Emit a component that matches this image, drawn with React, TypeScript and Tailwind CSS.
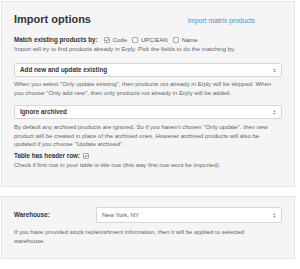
import React from "react";

function Check({ checked }: { checked?: boolean }) {
  return (
    <span className="relative inline-block h-[6px] w-[6px] shrink-0 rounded-[1px] border border-[#a8a8a8] bg-white">
      {checked && (
        <svg viewBox="0 0 10 10" className="absolute left-0 top-0 h-[4px] w-[4px]">
          <path d="M1.5 5 L4 7.8 L8.6 2" fill="none" stroke="#333" strokeWidth="1.8" />
        </svg>
      )}
    </span>
  );
}

function SelectBox({ label, bold, className }: { label: string; bold?: boolean; className?: string }) {
  return (
    <div
      className={
        "flex items-center justify-between rounded-[2px] border border-[#d6d6d6] bg-white pl-[5px] pr-[5px] " +
        (className ?? "")
      }
    >
      <span className={bold ? "text-[6.3px] font-bold text-[#333]" : "text-[6px] text-[#555]"}>{label}</span>
      <svg viewBox="0 0 6 10" className="h-[5px] w-[3px]">
        <path d="M0.5 4 L3 1 L5.5 4 Z M0.5 6 L3 9 L5.5 6 Z" fill="#888" />
      </svg>
    </div>
  );
}

export default function App() {
  return (
    <div className="w-[300px] bg-white pt-[1px] font-['Liberation_Sans',Arial,sans-serif] text-[6px] leading-[8.5px] text-[#666]">
      <section className="ml-[1px] w-[294px] border border-[#e3e3e3] bg-[#f5f5f5] px-[12px] pt-[10px] pb-[17px]">
        <div className="flex items-end justify-between">
          <h3 className="text-[11px] font-bold leading-[14px] text-[#333]">Import options</h3>
          <a className="mr-[27px] text-[6.8px] leading-[10px] text-[#4a8fcc]">import matrix products</a>
        </div>

        <div className="mt-[10px] flex items-center text-[#555]">
          <span className="text-[6.3px] font-bold text-[#333]">Match existing products by:</span>
          <span className="ml-[6px] flex items-center gap-[3px]">
            <Check checked /> Code
          </span>
          <span className="ml-[5px] flex items-center gap-[3px]">
            <Check /> UPC/EAN
          </span>
          <span className="ml-[5px] flex items-center gap-[3px]">
            <Check /> Name
          </span>
        </div>
        <p>Import will try to find products already in Erply. Pick the fields to do the matching by.</p>

        <SelectBox label="Add new and update existing" bold className="mt-[10px] h-[14px]" />
        <p className="mt-[3px]">
          When you select "Only update existing", then products not already in Erply will be skipped. When
          <br />
          you choose "Only add new", then only products not already in Erply will be added.
        </p>

        <SelectBox label="Ignore archived" bold className="mt-[8px] h-[14px]" />
        <p className="mt-[4px]">
          By default any archived products are ignored. So if you haven't chosen "Only update", then new product will
          be created in place of the archived ones. However archived products will also be updated if you choose
          "Update archived".
        </p>

        <div className="mt-[3px] flex h-[9px] items-center gap-[3px]">
          <span className="text-[6.3px] font-bold text-[#333]">Table has header row:</span>
          <Check checked />
        </div>
        <p>Check if first row in your table is title row (this way first row wont be imported).</p>
      </section>

      <section className="mt-[9px] ml-[1px] w-[294px] border border-[#e3e3e3] bg-[#f5f5f5] px-[12px] pt-[10px] pb-[13px]">
        <div className="flex items-center">
          <span className="w-[82px] text-[6.3px] font-bold text-[#333]">Warehouse:</span>
          <SelectBox label="New York, NY" className="h-[16px] flex-1" />
        </div>
        <p className="mt-[5px]">
          If you have provided stock replenishment information, then it will be applied to selected
          <br />
          warehouse.
        </p>
      </section>
    </div>
  );
}
